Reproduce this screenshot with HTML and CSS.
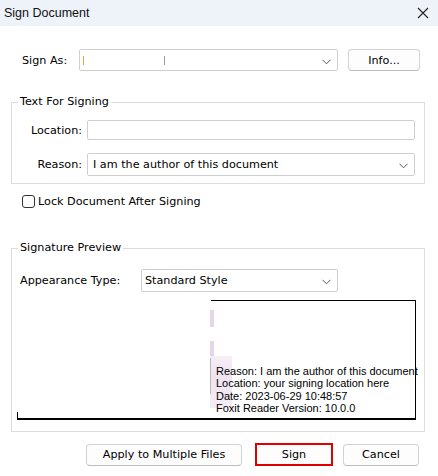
FILE: index.html
```html
<!DOCTYPE html>
<html>
<head>
<meta charset="utf-8">
<link rel="stylesheet" href="styles.css">
</head>
<body>
<div class="dialog">
  <div class="titlebar">
    <span class="title">Sign Document</span>
    <svg class="close" width="12" height="12" viewBox="0 0 12 12"><path d="M1 1L11 11M11 1L1 11" stroke="#222" stroke-width="1.1" fill="none"/></svg>
  </div>

  <div class="row signas">
    <span class="lbl lbl-signas">Sign As:</span>
    <div class="combo combo-signas">
      <span class="caret-orange"></span>
      <span class="caret-grey"></span>
      <svg class="chev" width="9" height="6" viewBox="0 0 9 6"><path d="M0.5 0.8L4.5 4.8L8.5 0.8" stroke="#555" stroke-width="1" fill="none"/></svg>
    </div>
    <button class="btn btn-info">Info...</button>
  </div>

  <fieldset class="group group-text">
    <legend>Text For Signing</legend>
    <div class="row frow">
      <span class="lbl lbl-r">Location:</span>
      <div class="input input-loc"></div>
    </div>
    <div class="row frow frow2">
      <span class="lbl lbl-r">Reason:</span>
      <div class="combo combo-reason">
        <span class="ctext">I am the author of this document</span>
        <svg class="chev" width="9" height="6" viewBox="0 0 9 6"><path d="M0.5 0.8L4.5 4.8L8.5 0.8" stroke="#555" stroke-width="1" fill="none"/></svg>
      </div>
    </div>
  </fieldset>

  <div class="row check">
    <span class="cbox"></span>
    <span class="lbl">Lock Document After Signing</span>
  </div>

  <fieldset class="group group-prev">
    <legend>Signature Preview</legend>
    <div class="row appear">
      <span class="lbl lbl-app">Appearance Type:</span>
      <div class="combo combo-app">
        <span class="ctext">Standard Style</span>
        <svg class="chev" width="9" height="6" viewBox="0 0 9 6"><path d="M0.5 0.8L4.5 4.8L8.5 0.8" stroke="#555" stroke-width="1" fill="none"/></svg>
      </div>
    </div>
    <div class="preview">
      <span class="pv-top"></span>
      <span class="pv-left"></span>
      <span class="logo logo-a"></span>
      <span class="logo logo-b"></span>
      <span class="logo logo-c"></span>
      <span class="pv-grey"></span>
      <div class="pv-text">
        <div>Reason: I am the author of this document</div>
        <div>Location: your signing location here</div>
        <div>Date: 2023-06-29 10:48:57</div>
        <div>Foxit Reader Version: 10.0.0</div>
      </div>
    </div>
  </fieldset>

  <div class="row buttons">
    <button class="btn btn-apply">Apply to Multiple Files</button>
    <button class="btn btn-sign">Sign</button>
    <button class="btn btn-cancel">Cancel</button>
  </div>
</div>
</body>
</html>
```

FILE: styles.css
```css
* { box-sizing: border-box; }
html, body { margin: 0; padding: 0; background: #ffffff; }
body {
  font-family: "DejaVu Sans", Verdana, sans-serif;
  font-size: 11.2px;
  color: #000;
}
.dialog {
  width: 438px;
  height: 476px;
  background: #fff;
  overflow: hidden;
}
.titlebar {
  height: 26px;
  background: #eef3f9;
  display: flex;
  align-items: center;
  justify-content: space-between;
  padding: 0 9px 0 4px;
}
.title { font-family: "Liberation Sans", Arial, sans-serif; font-size: 12.5px; color: #111; }
.close { display: block; }

.row { display: flex; align-items: center; }
.lbl { white-space: nowrap; line-height: 15px; }

.signas { margin-top: 23px; height: 22px; padding-left: 22px; }
.lbl-signas { width: 57px; }
.combo, .input {
  position: relative;
  background: #fff;
  border: 1px solid #cfcfcf;
  border-radius: 2px;
  display: flex;
  align-items: center;
}
.combo-signas { width: 259px; height: 22px; }
.caret-orange { position: absolute; left: 3px; top: 6px; width: 1px; height: 9px; background: #e9a43c; }
.caret-grey { position: absolute; left: 84px; top: 6px; width: 1px; height: 9px; background: #9a9a9a; }
.chev { position: absolute; right: 6px; top: 9px; }

.btn {
  font-family: inherit;
  font-size: 11.2px;
  color: #000;
  background: #fdfdfd;
  border: 1px solid #d2d2d2;
  border-bottom-color: #bdbdbd;
  border-radius: 4px;
  padding: 0;
  height: 22px;
}
.btn-info { width: 72px; margin-left: 10px; }

.group {
  margin: 0 0 0 11px;
  width: 414px;
  border: 1px solid #dcdcdc;
  border-radius: 0;
  padding: 0;
  min-width: 0;
}
.group legend {
  margin-left: 6px;
  padding: 0 2px 0 2px;
  line-height: 16px;
  height: 16px;
}
.group-text { margin-top: 23px; padding: 10px 9px 7px 0; }
.frow { height: 20px; }
.frow2 { margin-top: 13px; height: 23px; }
.lbl-r { width: 70px; text-align: right; margin-right: 5px; }
.input-loc { width: 328px; height: 20px; }
.combo-reason { width: 328px; height: 23px; }
.ctext { padding-left: 5px; line-height: 15px; white-space: nowrap; }

.check { margin-top: 11px; padding-left: 22px; height: 13px; }
.cbox {
  width: 13px; height: 13px;
  border: 1px solid #333;
  border-radius: 3px;
  margin-right: 3px;
  background: #fff;
}

.group-prev { margin-top: 32px; padding: 13px 9px 11px 0; }
.appear { height: 23px; padding-left: 8px; }
.lbl-app { width: 121px; }
.combo-app { width: 197px; height: 23px; }
.combo-app .ctext { padding-left: 3px; }

.preview {
  position: relative;
  margin: 8px 0 0 5px;
  width: 399px;
  height: 120px;
  border-right: 1px solid #000;
  border-bottom: 2px solid #000;
  font-family: "Liberation Sans", Arial, sans-serif;
  font-size: 11px;
}
.pv-top { position: absolute; left: 194px; top: 0; right: 0; height: 1px; background: #000; }
.pv-left { position: absolute; left: 0; bottom: 0; width: 1px; height: 6px; background: #000; }
.logo { position: absolute; background: #e7d6e9; }
.logo-a { left: 193px; top: 10px; width: 4px; height: 17px; }
.logo-b { left: 193px; top: 41px; width: 4px; height: 18px; }
.logo-c { left: 193px; top: 56px; width: 22px; height: 52px; background: linear-gradient(180deg, #f6eef7 0%, #efe3f0 40%, #f4ecf5 100%); }
.pv-grey { position: absolute; left: 193px; top: 58px; width: 1px; height: 36px; background: #b9b9b9; }
.pv-text {
  position: absolute;
  left: 199px;
  top: 65px;
  line-height: 12.4px;
  white-space: nowrap;
  color: #000;
}

.buttons { margin-top: 11px; justify-content: flex-end; padding-right: 19px; height: 23px; }
.btn-apply { width: 156px; }
.btn-sign { width: 78px; height: 23px; margin-left: 13px; border: 2px solid #e00000; border-radius: 0; background: #fdfdfd; }
.btn-cancel { width: 76px; margin-left: 10px; }
```
